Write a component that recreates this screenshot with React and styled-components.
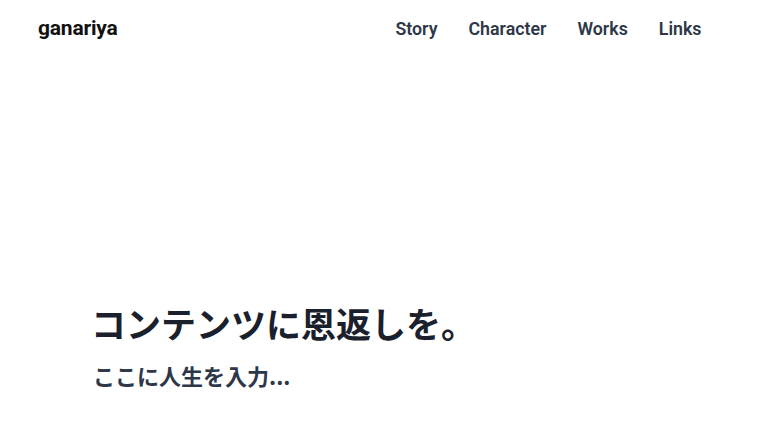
import React from "react";
import styled, { createGlobalStyle } from "styled-components";

const TEXT_DARK = "#1a202c";
const TEXT_NAV = "#2d3748";

const GlobalStyle = createGlobalStyle`
  *, *::before, *::after {
    box-sizing: border-box;
  }
  html, body, #root {
    margin: 0;
    height: 100%;
  }
  body {
    background: #ffffff;
    overflow: hidden;
    font-family: Roboto, "Noto Sans CJK JP", sans-serif;
  }
`;

const Page = styled.div`
  height: 100%;
  display: flex;
  flex-direction: column;
`;

const Header = styled.header`
  display: flex;
  align-items: center;
  justify-content: space-between;
  padding: 14px 51px 0 38px;
  height: 42px;
`;

const Logo = styled.a`
  font-size: 21px;
  font-weight: 700;
  color: #111111;
  letter-spacing: -0.2px;
`;

const Nav = styled.nav`
  display: flex;
`;

const NavLink = styled.a`
  padding: 0 15.5px;
  font-size: 17.8px;
  font-weight: 600;
  color: ${TEXT_NAV};
`;

const Hero = styled.main`
  flex: 1;
  display: flex;
  flex-direction: column;
  justify-content: flex-end;
  padding: 0 0 45px 91px;
`;

const Title = styled.h1`
  margin: 0;
  font-family: "Noto Sans CJK JP", sans-serif;
  font-size: 35px;
  font-weight: 700;
  line-height: 1.3;
  color: ${TEXT_DARK};
`;

const Subtitle = styled.p`
  margin: 16px 0 0 2px;
  font-family: "Noto Sans CJK JP", sans-serif;
  font-size: 22px;
  font-weight: 700;
  line-height: 1.3;
  color: ${TEXT_NAV};
`;

const links = ["Story", "Character", "Works", "Links"];

export default function App() {
  return (
    <Page>
      <GlobalStyle />
      <Header>
        <Logo>ganariya</Logo>
        <Nav>
          {links.map((l) => (
            <NavLink key={l}>{l}</NavLink>
          ))}
        </Nav>
      </Header>
      <Hero>
        <Title>コンテンツに恩返しを。</Title>
        <Subtitle>ここに人生を入力...</Subtitle>
      </Hero>
    </Page>
  );
}
